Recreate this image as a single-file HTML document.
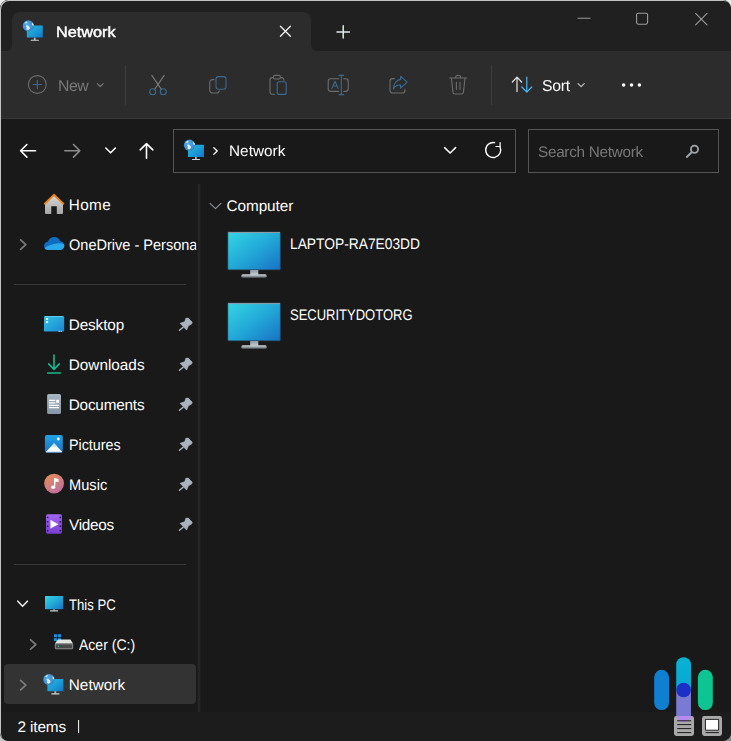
<!DOCTYPE html>
<html>
<head>
<meta charset="utf-8">
<title>Network</title>
<style>
html,body{margin:0;padding:0;}
body{width:731px;height:741px;overflow:hidden;background:#e9ece8;font-family:"Liberation Sans",sans-serif;position:relative;}
#win{position:absolute;left:0;top:0;width:731px;height:741px;background:#191919;border-radius:8.5px;overflow:hidden;}
#frame{position:absolute;left:0;top:0;width:731px;height:741px;border-radius:8.5px;box-shadow:inset 1px 1px 0 #c2c2c2;z-index:50;pointer-events:none;}
.corner{position:absolute;width:12px;height:12px;}
.abs{position:absolute;}
#titlebar{left:0;top:0;width:731px;height:51px;background:#202020;}
#tab{left:12px;top:12px;width:299px;height:39px;background:#2c2c2c;border-radius:8px 8px 0 0;}
#tabl{left:7px;top:46px;width:5px;height:5px;background:radial-gradient(circle at 0 0,rgba(0,0,0,0) 4.3px,#2c2c2c 5.2px);}
#tabr{left:311px;top:46px;width:5px;height:5px;background:radial-gradient(circle at 100% 0,rgba(0,0,0,0) 4.3px,#2c2c2c 5.2px);}
#toolbar{left:0;top:51px;width:731px;height:67px;background:#2c2c2c;}
#tbline{left:0;top:118px;width:731px;height:1px;background:#393939;}
#status{left:0;top:712px;width:731px;height:29px;background:#1c1c1c;}
#divider{left:197px;top:184px;width:4px;height:528px;background:linear-gradient(90deg,#161616 0,#262626 30%,#262626 55%,#1c1c1c 100%);}
.box{border:1px solid #555555;box-sizing:border-box;background:#191919;}
.t{position:absolute;white-space:nowrap;color:#fff;line-height:20px;font-size:15px;text-rendering:geometricPrecision;}
.sep{position:absolute;width:1px;background:#3d3d3d;}
.hl{position:absolute;height:1px;background:#3a3a3a;}
#sel{left:4px;top:664px;width:192px;height:40px;background:#333333;border-radius:4px;}
svg{position:absolute;overflow:visible;}
</style>
</head>
<body>
<div class="corner" style="left:0;top:729px;background:#c6c6c6;"></div>
<div class="corner" style="left:719px;top:729px;background:#8c8c8c;"></div>
<div id="win">
  <div id="titlebar" class="abs"></div>
  <div id="tab" class="abs"></div>
  <div id="tabl" class="abs"></div>
  <div id="tabr" class="abs"></div>
  <div id="toolbar" class="abs"></div>
  <div id="tbline" class="abs"></div>
  <div id="status" class="abs"></div>
  <div id="divider" class="abs"></div>

  <!-- toolbar separators -->
  <div class="sep" style="left:125px;top:65px;height:40px;"></div>
  <div class="sep" style="left:491px;top:65px;height:40px;"></div>

  <!-- address + search -->
  <div class="abs box" style="left:173px;top:129px;width:343px;height:44px;"></div>
  <div class="abs box" style="left:528px;top:129px;width:191px;height:44px;"></div>

  <!-- sidebar separators -->
  <div class="hl" style="left:14px;top:284px;width:172px;"></div>
  <div class="hl" style="left:14px;top:564px;width:172px;"></div>
  <div id="sel" class="abs"></div>

  <!-- TEXT -->
  <span class="t" style="left:55.87px;top:22.80px;font-size:15px;letter-spacing:0.000px;color:#ffffff;transform:scaleX(1.0817);transform-origin:0 0;will-change:transform;-webkit-text-stroke:0.45px #ffffff;">Network</span>
  <span class="t" style="left:58.20px;top:77.23px;font-size:15.8px;letter-spacing:-0.425px;color:#787878;will-change:transform;">New</span>
  <span class="t" style="left:542.38px;top:77.23px;font-size:15.8px;letter-spacing:-0.248px;color:#ffffff;will-change:transform;">Sort</span>
  <span class="t" style="left:229.34px;top:141.70px;font-size:15.3px;letter-spacing:0.053px;color:#ffffff;will-change:transform;">Network</span>
  <span class="t" style="left:537.71px;top:142.80px;font-size:15.3px;letter-spacing:-0.282px;color:#787878;will-change:transform;">Search Network</span>
  <span class="t" style="left:68.74px;top:195.60px;font-size:15.3px;letter-spacing:0.374px;color:#ffffff;">Home</span>
  <span class="t" style="left:68.81px;top:235.60px;font-size:15.3px;letter-spacing:0.000px;color:#ffffff;transform:scaleX(0.9499);transform-origin:0 0;width:133.90px;overflow:hidden;">OneDrive - Personal</span>
  <span class="t" style="left:68.74px;top:315.60px;font-size:15.3px;letter-spacing:-0.105px;color:#ffffff;">Desktop</span>
  <span class="t" style="left:68.74px;top:355.60px;font-size:15.3px;letter-spacing:0.014px;color:#ffffff;">Downloads</span>
  <span class="t" style="left:68.74px;top:395.60px;font-size:15.3px;letter-spacing:-0.197px;color:#ffffff;">Documents</span>
  <span class="t" style="left:68.83px;top:435.60px;font-size:15.3px;letter-spacing:0.000px;color:#ffffff;transform:scaleX(0.9334);transform-origin:0 0;">Pictures</span>
  <span class="t" style="left:68.80px;top:475.60px;font-size:15.3px;letter-spacing:0.000px;color:#ffffff;transform:scaleX(0.9584);transform-origin:0 0;">Music</span>
  <span class="t" style="left:69.03px;top:515.60px;font-size:15.3px;letter-spacing:-0.252px;color:#ffffff;">Videos</span>
  <span class="t" style="left:69.31px;top:595.60px;font-size:15.3px;letter-spacing:0.000px;color:#ffffff;transform:scaleX(0.8582);transform-origin:0 0;">This PC</span>
  <span class="t" style="left:79.37px;top:635.50px;font-size:15.3px;letter-spacing:0.000px;color:#ffffff;transform:scaleX(0.9166);transform-origin:0 0;">Acer (C:)</span>
  <span class="t" style="left:68.74px;top:675.50px;font-size:15.3px;letter-spacing:0.053px;color:#ffffff;">Network</span>
  <span class="t" style="left:17.43px;top:717.50px;font-size:15.3px;letter-spacing:-0.099px;color:#ffffff;">2 items</span>
  <span class="t" style="left:226.62px;top:196.80px;font-size:15.3px;letter-spacing:-0.078px;color:#ffffff;">Computer</span>
  <span class="t" style="left:289.77px;top:234.60px;font-size:15.3px;letter-spacing:0.000px;color:#ffffff;transform:scaleX(0.9014);transform-origin:0 0;">LAPTOP-RA7E03DD</span>
  <span class="t" style="left:289.91px;top:305.70px;font-size:15.3px;letter-spacing:0.000px;color:#ffffff;transform:scaleX(0.8495);transform-origin:0 0;">SECURITYDOTORG</span>

  <!-- ICONS -->
<svg width="731" height="741" viewBox="0 0 731 741" style="left:0;top:0;" fill="none" stroke-linecap="round" stroke-linejoin="round">
<defs>
  <linearGradient id="gScreen" x1="0" y1="0" x2="1" y2="1">
    <stop offset="0" stop-color="#35d6e4"/><stop offset="0.5" stop-color="#22a9d8"/><stop offset="1" stop-color="#1872c4"/>
  </linearGradient>
  <radialGradient id="gGlobe" cx="0.4" cy="0.4" r="0.75">
    <stop offset="0" stop-color="#5aaae6"/><stop offset="0.6" stop-color="#3f92d8"/><stop offset="1" stop-color="#2a7a9c"/>
  </radialGradient>
  <linearGradient id="gScreen2" x1="0" y1="0" x2="1" y2="1">
    <stop offset="0" stop-color="#25bbdf"/><stop offset="0.55" stop-color="#1b9ad6"/><stop offset="1" stop-color="#1274c6"/>
  </linearGradient>
  <linearGradient id="gStand" x1="0" y1="0" x2="0" y2="1">
    <stop offset="0" stop-color="#8f9aa3"/><stop offset="1" stop-color="#c6ccd1"/>
  </linearGradient>
  <!-- network icon: 20.5 x 20 -->
  <g id="netIcon">
    <rect x="3.8" y="4.9" width="16" height="12.1" rx="0.5" fill="url(#gScreen2)" stroke="none"/>
    <rect x="10.8" y="17" width="1.8" height="2.4" fill="#aeb6bc" stroke="none"/>
    <rect x="7.7" y="19.1" width="8.2" height="1.1" rx="0.5" fill="#d3d8dc" stroke="none"/>
    <circle cx="5.3" cy="5.3" r="5.6" fill="url(#gGlobe)" stroke="none"/>
    <path d="M2.6 5.2 L4.4 4.6 L6.6 6.4 L6.8 8.2 L5 9.6 L3.2 8.6 L3.8 6.8 Z" fill="#eef6fb" stroke="none" opacity="0.9"/>
    <path d="M1.4 2.6 L3 1 L4.6 1.4 L3.2 3 Z" fill="#e8f2f8" stroke="none" opacity="0.85"/>
    <path d="M9 1.8 L10.6 3.6 L10.4 5.4 L9 4.4 Z" fill="#eef4f2" stroke="none" opacity="0.9"/>
    <path d="M5.4 0.4 L8.4 1.2 L8.6 3.4 L6.4 3.2 Z" fill="#3f9fb2" stroke="none" opacity="0.8"/>
  </g>
  <linearGradient id="gDesk" x1="0" y1="0" x2="1" y2="1">
    <stop offset="0" stop-color="#2fc6e2"/><stop offset="1" stop-color="#1b84d2"/>
  </linearGradient>
  <linearGradient id="gPic" x1="0" y1="0" x2="0" y2="1">
    <stop offset="0" stop-color="#22a2e4"/><stop offset="1" stop-color="#1a72c6"/>
  </linearGradient>
  <linearGradient id="gMus" x1="0.2" y1="0" x2="0.8" y2="1">
    <stop offset="0" stop-color="#e58d58"/><stop offset="1" stop-color="#bd6da4"/>
  </linearGradient>
  <linearGradient id="gVid" x1="0" y1="0" x2="0" y2="1">
    <stop offset="0" stop-color="#a066ee"/><stop offset="1" stop-color="#7a3ed0"/>
  </linearGradient>
  <linearGradient id="gDoc" x1="0" y1="0" x2="0" y2="1">
    <stop offset="0" stop-color="#a9b7c4"/><stop offset="1" stop-color="#8796a8"/>
  </linearGradient>
  <linearGradient id="gHome" x1="0" y1="0" x2="0" y2="1">
    <stop offset="0" stop-color="#d6d6d6"/><stop offset="1" stop-color="#a6a6a6"/>
  </linearGradient>
  <linearGradient id="gBase" x1="0" y1="0" x2="0" y2="1">
    <stop offset="0" stop-color="#d3d8db"/><stop offset="0.5" stop-color="#9aa3a9"/><stop offset="1" stop-color="#3c4246"/>
  </linearGradient>
  <linearGradient id="gMid" x1="0" y1="0" x2="0" y2="1">
    <stop offset="0" stop-color="#08b2d2"/><stop offset="0.48" stop-color="#0aa8d2"/><stop offset="0.52" stop-color="#7a7ad2"/><stop offset="1" stop-color="#7a7ad2"/>
  </linearGradient>
  <!-- pin (origin = 170,310 in page) -->
  <g id="pin">
    <path d="M16 8.2 L18.05 8 L22.2 12.1 L21.7 13.95 L18.5 15.8 L16.6 20.1 L10.05 13.3 L14.6 11.7 Z" fill="#a9b4be" stroke="#a9b4be" stroke-width="0.6"/>
    <path d="M13.1 17.2 L9.5 20.3" stroke="#a9b4be" stroke-width="1.5"/>
  </g>
  <!-- big monitor (origin = 220,225) -->
  <g id="bigMon">
    <rect x="7.9" y="6.9" width="52.4" height="37.9" rx="0.8" fill="url(#gScreen)" stroke="#2b5068" stroke-width="0.6"/>
    <rect x="8.2" y="7.0" width="51.8" height="1.1" fill="#8b9ba7" stroke="none"/>
    <rect x="30.2" y="45" width="8.1" height="4.8" fill="url(#gStand)" stroke="none"/>
    <rect x="21.3" y="49.3" width="25.4" height="3.6" rx="1.6" fill="url(#gBase)" stroke="none"/>
  </g>
  <!-- small chevron right 7x11, origin top-left -->
  <path id="chevR" d="M0.8 0.8 L6 5.5 L0.8 10.2" stroke="#7a7a7a" stroke-width="1.8" fill="none"/>
</defs>

<!-- tab icon, address icon, sidebar icon -->
<use href="#netIcon" x="23" y="20.6"/>
<use href="#netIcon" x="184.2" y="139.9"/>
<use href="#netIcon" x="43.6" y="674.2"/>

<!-- tab close X -->
<path d="M280.4 26.2 L290.4 36.2 M290.4 26.2 L280.4 36.2" stroke="#f2f2f2" stroke-width="1.3"/>
<!-- plus -->
<path d="M337 31.9 H349.4 M343.2 25.8 V38" stroke="#e3e8ee" stroke-width="1.5"/>
<!-- window controls -->
<path d="M578 18.3 H590" stroke="#9c9c9c" stroke-width="1.1"/>
<rect x="636.6" y="13.2" width="11" height="11" rx="1.6" stroke="#9c9c9c" stroke-width="1.1"/>
<path d="M695.6 13.4 L707 24.8 M707 13.4 L695.6 24.8" stroke="#9c9c9c" stroke-width="1.1"/>

<!-- TOOLBAR -->
<!-- New -->
<circle cx="37.3" cy="84.5" r="8.9" stroke="#6c6c6c" stroke-width="1.1"/>
<path d="M33.2 84.5 H41.4 M37.3 80.4 V88.6" stroke="#3b6a91" stroke-width="1.2"/>
<path d="M97.3 83.6 L100.2 86.5 L103.1 83.6" stroke="#7a7a7a" stroke-width="1.1"/>
<!-- Cut -->
<g stroke-width="1.1">
  <path d="M151.8 75.4 L161.4 89.4 M164.2 75.4 L154.6 89.4" stroke="#7a7a7a"/>
  <circle cx="152.7" cy="91.7" r="3" stroke="#3b6a91"/>
  <circle cx="163.3" cy="91.7" r="3" stroke="#3b6a91"/>
</g>
<!-- Copy -->
<g stroke-width="1.1">
  <path d="M214 79.6 H212.4 A2.6 2.6 0 0 0 209.8 82.2 V90.4 A2.6 2.6 0 0 0 212.4 93 H216.6 A2.6 2.6 0 0 0 219.2 90.8" stroke="#6c6c6c"/>
  <rect x="216" y="76.6" width="10" height="12.6" rx="2.4" stroke="#3b6a91"/>
</g>
<!-- Paste -->
<g stroke-width="1.1">
  <path d="M273.4 77.6 H272.2 A2.2 2.2 0 0 0 270 79.8 V92 A2.2 2.2 0 0 0 272.2 94.2 H274.6" stroke="#6c6c6c"/>
  <path d="M280.4 77.6 H281.6 A2.2 2.2 0 0 1 283.8 79.8 V80.2" stroke="#6c6c6c"/>
  <rect x="273.4" y="75.4" width="7" height="3.6" rx="1.6" stroke="#6c6c6c"/>
  <rect x="277.2" y="81.8" width="9" height="12.6" rx="2" stroke="#3b6a91"/>
</g>
<!-- Rename -->
<g stroke-width="1.1">
  <path d="M338.6 78.8 H330.8 A2.6 2.6 0 0 0 328.2 81.4 V88.8 A2.6 2.6 0 0 0 330.8 91.4 H338.6" stroke="#6c6c6c"/>
  <path d="M343.8 78.8 H345.6 A2.6 2.6 0 0 1 348.2 81.4 V88.8 A2.6 2.6 0 0 1 345.6 91.4 H343.8" stroke="#6c6c6c"/>
  <path d="M341.3 75.6 V94.4 M339 75.4 H343.6 M339 94.6 H343.6" stroke="#3b6a91"/>
  <path d="M331.8 88.6 L335 81.2 L338.2 88.6 M333 86 H337" stroke="#3b6a91" stroke-width="1.1"/>
</g>
<!-- Share -->
<g stroke-width="1.1">
  <path d="M394.4 78.6 H392.6 A2.6 2.6 0 0 0 390 81.2 V90.4 A2.6 2.6 0 0 0 392.6 93 H402.4 A2.6 2.6 0 0 0 405 90.4 V89.4" stroke="#6c6c6c"/>
  <path d="M400.6 76.2 L407 82.2 L400.6 88.2 V85 C397 84.8 394.6 86.4 393.4 89 C393.6 84.2 396.2 80 400.6 79.4 Z" stroke="#3b6a91"/>
</g>
<!-- Delete -->
<g stroke-width="1.1" stroke="#6c6c6c">
  <path d="M449.6 78 H466.8"/>
  <path d="M455.6 77.8 A2.6 2.6 0 0 1 460.8 77.8"/>
  <path d="M451.4 78.4 L453 92.4 A1.8 1.8 0 0 0 454.8 94 H461.6 A1.8 1.8 0 0 0 463.4 92.4 L465 78.4"/>
  <path d="M456.4 82.4 V89.6 M460 82.4 V89.6"/>
</g>
<!-- Sort -->
<path d="M517 91.6 V77.4 M512.4 82 L517 77.2 L521.6 82" stroke="#e6e6e6" stroke-width="1.2"/>
<path d="M526.8 77.2 V92 M521.8 87 L526.8 92.2 L531.8 87" stroke="#4cb5f2" stroke-width="1.2"/>
<path d="M578 83.6 L581.1 86.7 L584.2 83.6" stroke="#c8c8c8" stroke-width="1.1"/>
<g fill="#ffffff" stroke="none"><circle cx="623.6" cy="85" r="1.75"/><circle cx="631.5" cy="85" r="1.75"/><circle cx="639.4" cy="85" r="1.75"/></g>

<!-- NAV -->
<path d="M35.6 150.8 H20.9 M26.9 144.5 L20.6 150.8 L26.9 157.1" stroke="#ffffff" stroke-width="1.6"/>
<path d="M64.8 150.8 H79.5 M73.5 144.5 L79.8 150.8 L73.5 157.1" stroke="#8b8b8b" stroke-width="1.6"/>
<path d="M105.8 148 L110.6 152.8 L115.4 148" stroke="#ffffff" stroke-width="1.6"/>
<path d="M146.5 158.2 V143.8 M140.2 149.9 L146.5 143.6 L152.8 149.9" stroke="#ffffff" stroke-width="1.6"/>
<!-- address chevrons / refresh -->
<path d="M213.8 147.8 L217.2 151 L213.8 154.2" stroke="#ffffff" stroke-width="1.3"/>
<path d="M444.6 147.6 L450.1 153 L455.6 147.6" stroke="#ffffff" stroke-width="1.5"/>
<path d="M500 146.8 A7.5 7.5 0 1 1 494.6 142.65" stroke="#ffffff" stroke-width="1.4"/>
<path d="M500.1 142.6 V146.5 H496" stroke="#ffffff" stroke-width="1.2"/>
<!-- search -->
<circle cx="694.5" cy="149.3" r="3.6" stroke="#a0a5aa" stroke-width="1.8"/>
<path d="M691.9 152 L686.3 157.5" stroke="#a0a5aa" stroke-width="2" stroke-linecap="butt"/>

<!-- SIDEBAR ICONS -->
<!-- Home -->
<path d="M45 203.4 L54 195.6 L63 203.4 V213 A1 1 0 0 1 62 214 H56.8 V206.2 H51.3 V214 H46 A1 1 0 0 1 45 213 Z" fill="url(#gHome)" stroke="none"/>
<path d="M44.8 203.7 L54 194.9 L63.4 203.7" stroke="#e0841f" stroke-width="1.9" stroke-linejoin="miter" stroke-linecap="round"/>
<!-- OneDrive -->
<path d="M47.8 249.8 C45.4 249.8 44 248 44 245.9 C44 243.4 45.8 241.6 48 241.4 C49 238.8 51.4 237 54.2 237 C57 237 59.2 238.6 60.2 241.2 C62.6 241.4 64.3 243.2 64.3 245.6 C64.3 248 62.6 249.8 60.4 249.8 Z" fill="#0f6cc4" stroke="none"/>
<path d="M47.8 249.9 C46.4 249.9 45.2 249.2 44.6 248 C48 245.4 52.6 243.8 57.6 243.4 C60.2 243.2 62.6 243.6 64.1 244.4 C64.3 244.8 64.3 245.2 64.3 245.6 C64.3 248 62.6 249.9 60.4 249.9 Z" fill="#2aa9ea" stroke="none"/>
<use href="#chevR" x="19.8" y="239.1"/>
<!-- Desktop -->
<rect x="44" y="316" width="20.2" height="15.6" rx="1.2" fill="url(#gDesk)" stroke="none"/>
<rect x="45" y="316" width="18.2" height="0.9" fill="#62d3f2" stroke="none"/>
<rect x="46" y="318.1" width="2.1" height="1.7" fill="#ffffff" stroke="none"/>
<rect x="46" y="321.2" width="2.1" height="1.8" fill="#ffffff" stroke="none"/>
<rect x="58.6" y="330.8" width="1.2" height="1" fill="#e8f4fb" stroke="none"/>
<rect x="60.6" y="330.8" width="1.2" height="1" fill="#e8f4fb" stroke="none"/>
<!-- Downloads -->
<path d="M54 355 V369 M48.7 363.9 L54 369.4 L59.3 363.9" stroke="#18b98f" stroke-width="1.6"/>
<path d="M47.6 373 H60.4" stroke="#18b98f" stroke-width="1.6"/>
<!-- Documents -->
<rect x="47.1" y="394" width="13.9" height="20" rx="1.6" fill="url(#gDoc)" stroke="none"/>
<path d="M49 400.4 H55.2 M49 402.8 H55.2 M49 405.3 H59 M49 407.6 H59" stroke="#ffffff" stroke-width="1.2" stroke-linecap="butt"/>
<rect x="56.2" y="399.8" width="2.8" height="3.1" fill="#ffffff" stroke="none"/>
<!-- Pictures -->
<rect x="44.9" y="434.9" width="17.9" height="17.8" rx="2" fill="url(#gPic)" stroke="none"/>
<path d="M46.4 451.7 L54.1 443.6 L61.7 451.7 Z" fill="#ffffff" stroke="#ffffff" stroke-width="0.6"/>
<path d="M54.1 443.6 L57 446.7 H51.2 Z" fill="#bfe3f7" stroke="none"/>
<circle cx="58.3" cy="439" r="1.4" fill="#ffffff" stroke="none"/>
<!-- Music -->
<circle cx="54.1" cy="483.6" r="9.9" fill="url(#gMus)" stroke="none"/>
<ellipse cx="53.1" cy="487.2" rx="2.1" ry="1.8" fill="#ffffff" stroke="none"/>
<path d="M54.6 487 V478.6 L58 479.6 V481.4 L55.8 480.8" stroke="#ffffff" stroke-width="1.2" fill="#ffffff"/>
<!-- Videos -->
<rect x="46" y="514.3" width="15.9" height="19.4" rx="1.6" fill="url(#gVid)" stroke="none"/>
<path d="M50.9 520.4 L57.9 524.2 L50.9 528 Z" fill="#ffffff" stroke="#ffffff" stroke-width="0.5"/>
<g fill="#2c1266" stroke="none">
  <circle cx="47.6" cy="517.4" r="0.9"/><circle cx="47.6" cy="521.8" r="0.9"/><circle cx="47.6" cy="526.2" r="0.9"/><circle cx="47.6" cy="530.6" r="0.9"/>
  <circle cx="60.3" cy="517.4" r="0.9"/><circle cx="60.3" cy="521.8" r="0.9"/><circle cx="60.3" cy="526.2" r="0.9"/><circle cx="60.3" cy="530.6" r="0.9"/>
</g>
<!-- pins -->
<use href="#pin" x="170" y="310"/>
<use href="#pin" x="170" y="350"/>
<use href="#pin" x="170" y="390"/>
<use href="#pin" x="170" y="430"/>
<use href="#pin" x="170" y="470"/>
<use href="#pin" x="170" y="510"/>
<!-- This PC -->
<path d="M17.8 601.2 L22.6 606.2 L27.4 601.2" stroke="#e8e8e8" stroke-width="1.6"/>
<rect x="45" y="595.9" width="18.1" height="13.3" rx="0.6" fill="url(#gScreen)" stroke="none"/>
<rect x="53.2" y="609.2" width="1.8" height="1.4" fill="#9aa5ad" stroke="none"/>
<rect x="50" y="610.3" width="8.2" height="1.1" rx="0.5" fill="#c9d0d5" stroke="none"/>
<!-- Acer C: -->
<use href="#chevR" x="29.8" y="639"/>
<g fill="#1b90e2" stroke="none">
  <rect x="54" y="634.2" width="3" height="3"/><rect x="58" y="634.2" width="3" height="3"/>
  <rect x="54" y="638.2" width="3" height="2.9"/><rect x="58" y="638.2" width="3" height="2.9"/>
</g>
<path d="M57.8 639.4 H70.4 L73 643.6 H55 Z" fill="#e2e6e2" stroke="none"/>
<rect x="55.3" y="643.8" width="17.4" height="5" rx="0.5" fill="#484848" stroke="#b4b4b4" stroke-width="0.7"/>
<circle cx="58.4" cy="646.2" r="0.8" fill="#28d08a" stroke="none"/>
<!-- Network row chevron -->
<use href="#chevR" x="19.8" y="679.6"/>

<!-- CONTENT -->
<path d="M210 203.4 L215.5 208.6 L221 203.4" stroke="#8e9298" stroke-width="1.1"/>
<use href="#bigMon" x="220" y="225"/>
<use href="#bigMon" x="220" y="296"/>

<!-- WATERMARK -->
<rect x="654.2" y="669.8" width="14.8" height="40.3" rx="7.4" fill="#0f80d0" stroke="none"/>
<rect x="676.2" y="657.2" width="14.8" height="65.2" rx="7.4" fill="url(#gMid)" stroke="none"/>
<circle cx="683.6" cy="690" r="7.3" fill="#1c30c6" stroke="none"/>
<rect x="697.9" y="669.8" width="14.9" height="40.3" rx="7.4" fill="#0cc592" stroke="none"/>

<!-- STATUS BAR -->
<rect x="78" y="720" width="1.1" height="13" fill="#e8e8e8" stroke="none"/>
<rect x="674" y="716" width="20" height="20" rx="2.4" fill="#a9a9a9" stroke="none"/>
<path d="M676.7 716 H691.3 A7.4 7.4 0 0 1 676.7 716 Z" fill="#b48cf0" stroke="none"/>
<path d="M677.2 720.8 H691.2 M677.2 724.6 H691.2 M677.2 728.6 H691.2 M677.2 732.6 H691.2" stroke="#1a1a1a" stroke-width="1" stroke-linecap="butt"/>
<rect x="702" y="716" width="20" height="20" rx="2.4" fill="#a9a9a9" stroke="none"/>
<rect x="705.8" y="719.4" width="12.8" height="10.8" fill="#ffffff" stroke="#111111" stroke-width="0.9"/>
<path d="M705.6 732.6 H718.8" stroke="#1a1a1a" stroke-width="1" stroke-linecap="butt"/>
</svg>

</div>
<div id="frame"></div>
</body>
</html>
